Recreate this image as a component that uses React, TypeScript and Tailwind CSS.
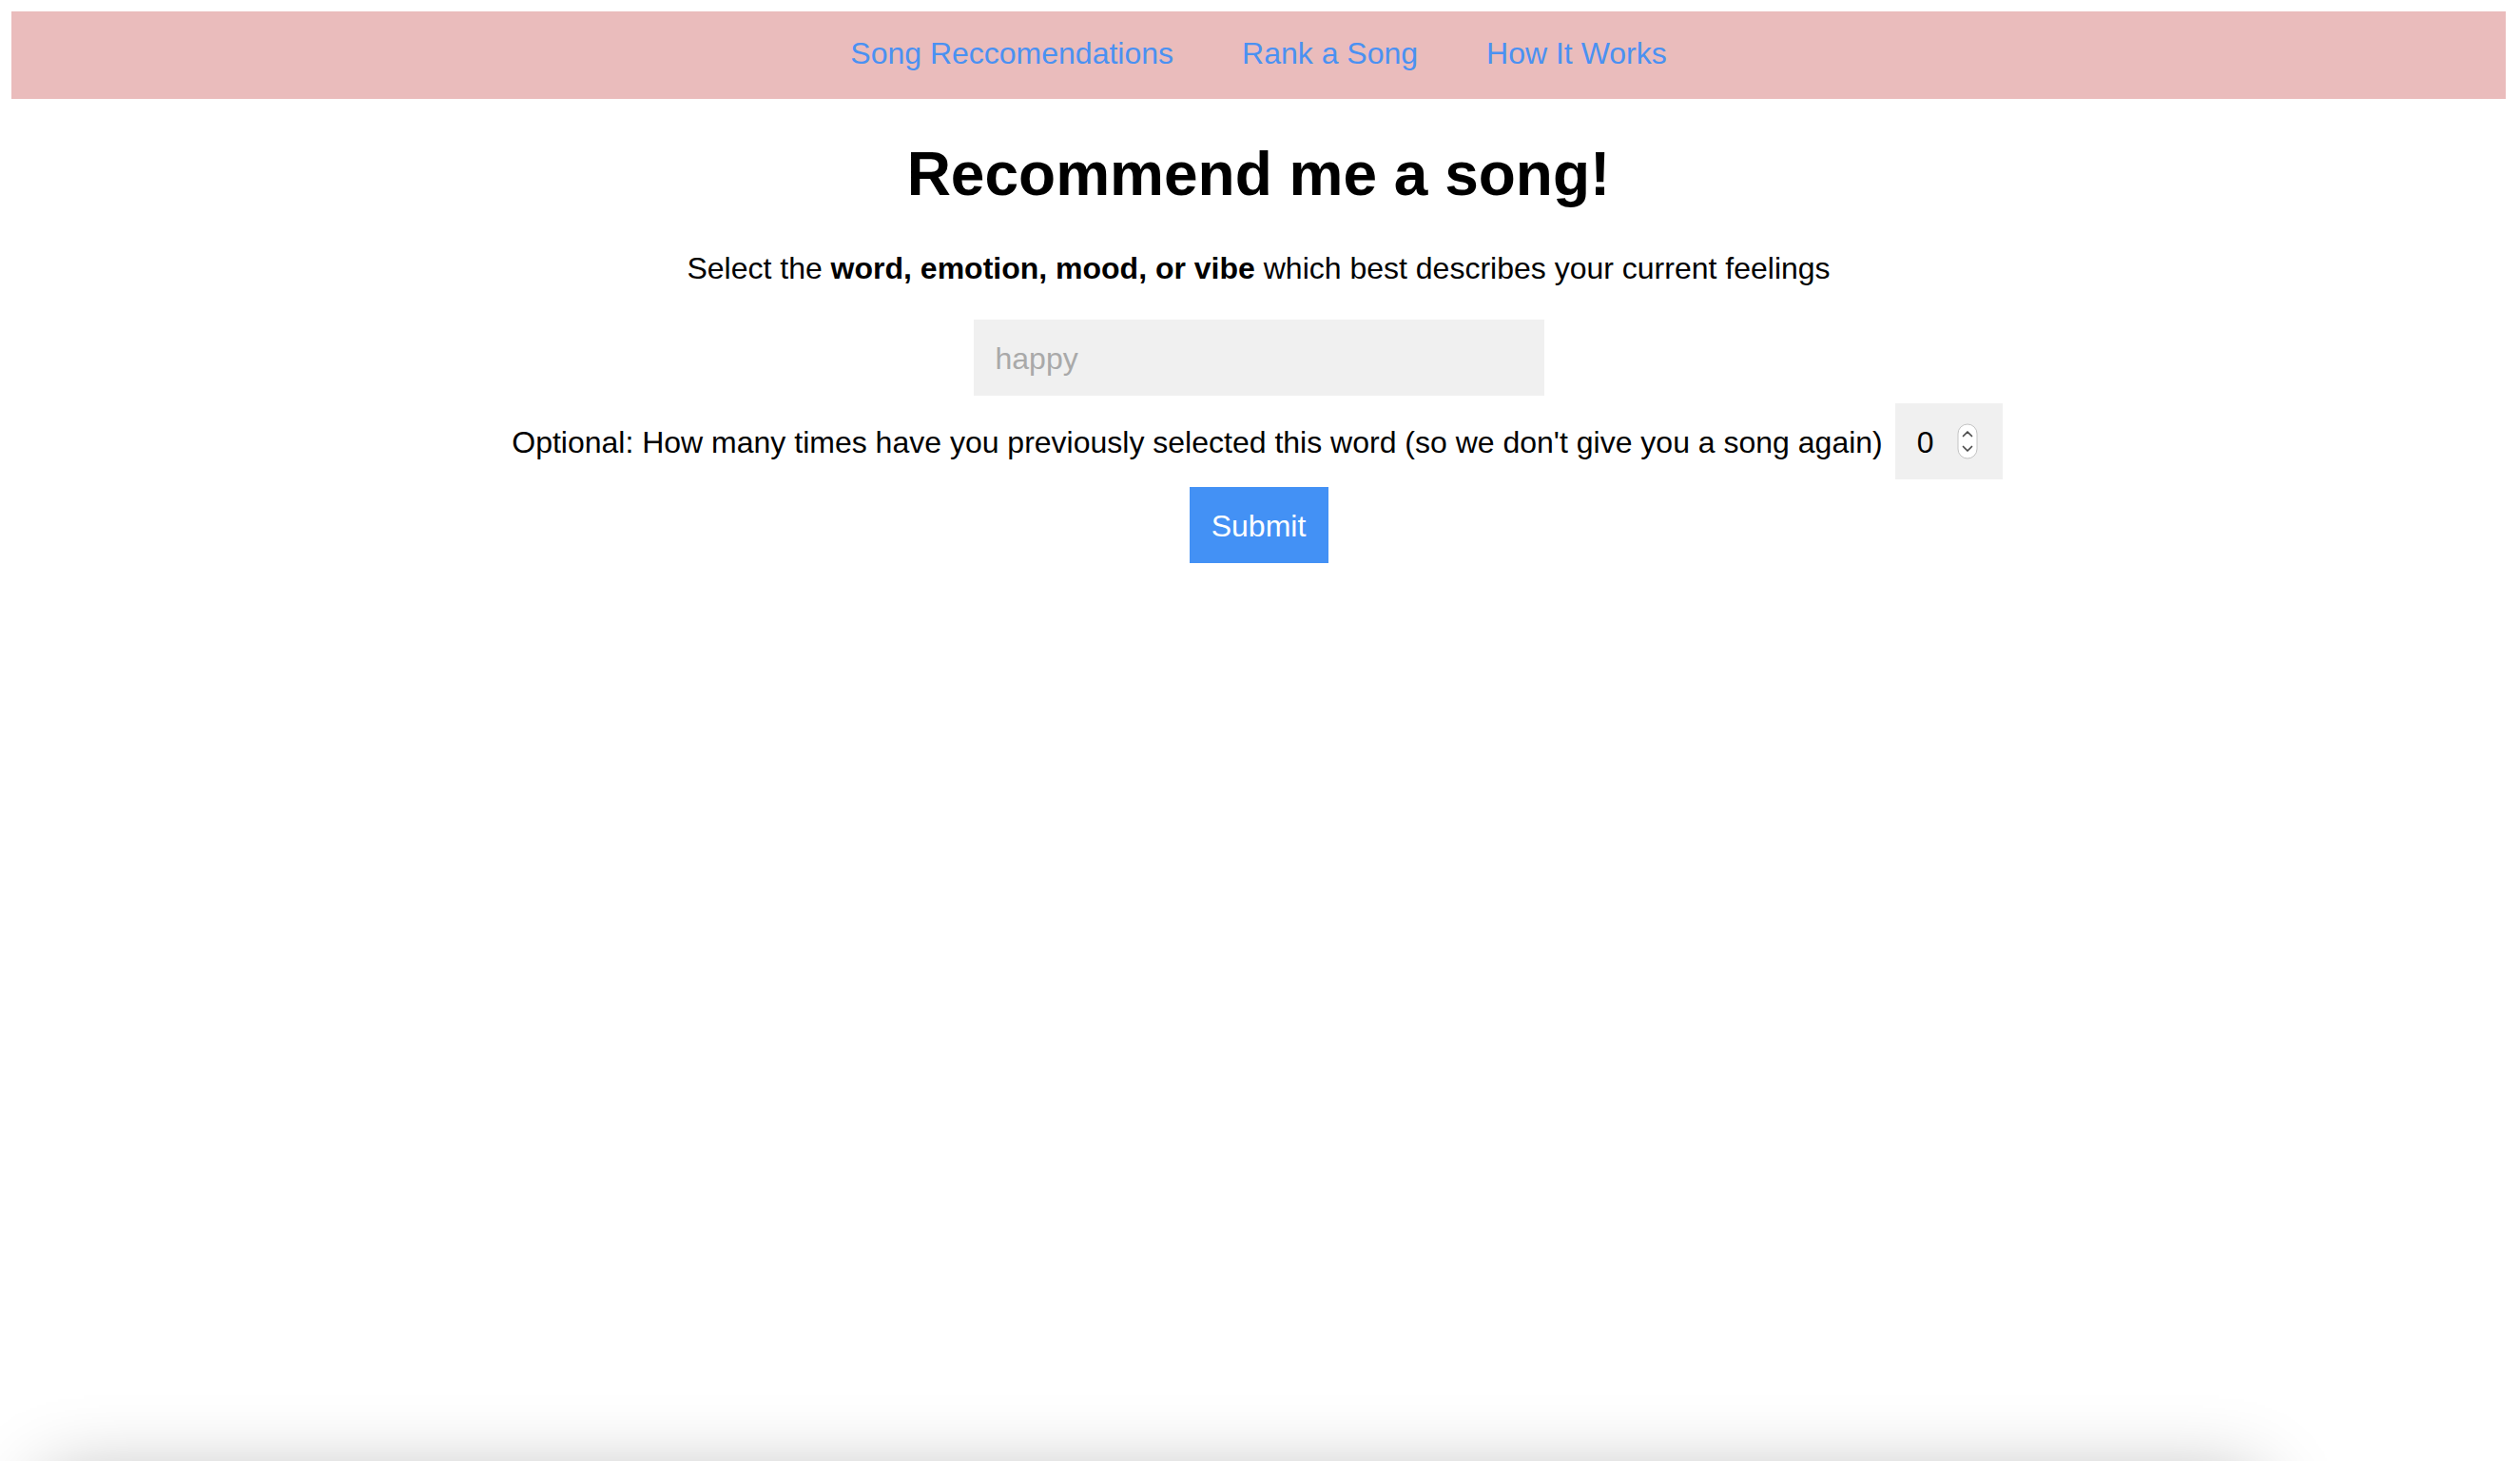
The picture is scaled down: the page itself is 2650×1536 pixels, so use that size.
import React from "react";

function Spinner() {
  return (
    <svg width="22" height="38" viewBox="0 0 22 38" className="block">
      <rect x="1" y="1" width="20" height="36" rx="10" ry="10" fill="#ffffff" stroke="#c4c4c4" strokeWidth="1" />
      <path d="M6.5 13.5 L11 9 L15.5 13.5" fill="none" stroke="#4a4a4a" strokeWidth="1.7" strokeLinecap="round" strokeLinejoin="round" />
      <path d="M6.5 24.5 L11 29 L15.5 24.5" fill="none" stroke="#4a4a4a" strokeWidth="1.7" strokeLinecap="round" strokeLinejoin="round" />
    </svg>
  );
}

export default function App() {
  return (
    <div
      className="h-[1536px] overflow-hidden bg-white pt-[12px] pl-[12px] pr-[15px] text-black"
      style={{ fontFamily: '"Liberation Sans", Arial, sans-serif' }}
    >
      <nav className="flex h-[92px] items-center justify-center gap-[72px] bg-[#eabcbc] pb-[3px] text-[32px] leading-[37px] text-[#4a91f2]">
        <a className="cursor-pointer">Song Reccomendations</a>
        <a className="cursor-pointer">Rank a Song</a>
        <a className="cursor-pointer">How It Works</a>
      </nav>

      <div className="flex flex-col items-center">
        <h1 className="mt-[43px] text-center text-[64px] font-bold leading-[73.5px]">Recommend me a song!</h1>
        <p className="mt-[43px] text-center text-[32px] leading-[37px]">
          Select the <b className="font-bold">word, emotion, mood, or vibe</b> which best describes your current feelings
        </p>
        <input
          type="text"
          placeholder="happy"
          className="mt-[35px] h-[80px] w-[600px] bg-[#f0f0f0] pl-[23px] pt-[3px] text-[32px] outline-none placeholder:text-[#a9a9a9]"
        />
        <div className="mt-[8px] flex h-[80px] items-center gap-[13px] pr-[3px]">
          <span className="pt-[3px] text-[32px] leading-[37px]">
            Optional: How many times have you previously selected this word (so we don't give you a song again)
          </span>
          <div className="flex h-[80px] w-[113px] items-center bg-[#f0f0f0] pl-[23px]">
            <span className="w-[42px] pt-[3px] text-[32px] leading-[37px]">0</span>
            <Spinner />
          </div>
        </div>
        <button className="mt-[8px] h-[80px] w-[146px] bg-[#4391f5] pt-[3px] text-[32px] text-white">Submit</button>
      </div>

      <div className="ml-[36px] mt-[966px] h-[400px] w-[2325px] bg-white shadow-[0_0_80px_rgba(0,0,0,0.33)]" />
    </div>
  );
}
